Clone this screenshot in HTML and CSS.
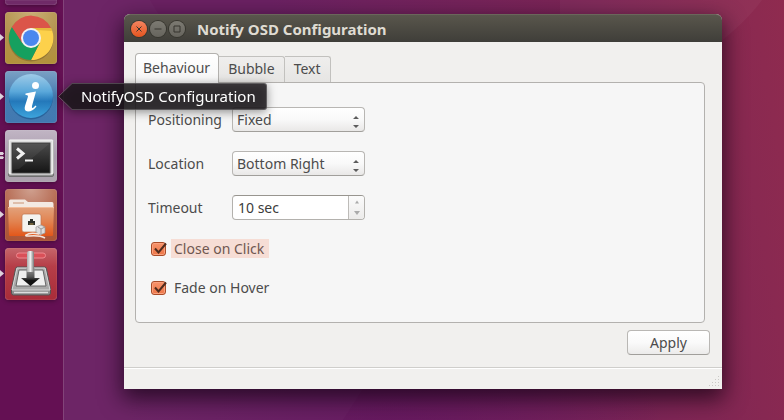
FILE: index.html
```html
<!DOCTYPE html>
<html lang="en">
<head>
<meta charset="utf-8">
<title>Notify OSD Configuration</title>
<link rel="stylesheet" href="styles.css">
</head>
<body>
<div class="desktop">
  <svg class="wallpaper" viewBox="0 0 784 420" preserveAspectRatio="none" aria-hidden="true">
    <path d="M762 0Q746 22 715 46H560V0Z" fill="#fff" opacity=".035"/>
    <path d="M375 370L343 420H64V0H150Z" fill="#fff" opacity=".02"/>
  </svg>
  <nav class="dock" aria-label="Launcher">
    <div class="tile tile-cut"></div>
    <button class="tile chrome" type="button" aria-label="Chrome">
      <i class="pip"></i>
      <svg viewBox="0 0 52 52" aria-hidden="true">
        <circle cx="26" cy="27" r="22.5" fill="#5b4518" opacity=".35"/>
        <path d="M26 16H46A22 22 0 0 1 26 48L34.700 31Z" fill="#fdd14b"/>
        <path d="M6.950 15 17.300 31 26 36 34.700 31 26 48A22 22 0 0 1 6.950 15Z" fill="#16a05f"/>
        <path d="M6.950 15A22 22 0 0 1 46 16H26L17.300 31Z" fill="#db5549"/>
        <path d="M26 16H46l1 3-15-1z" fill="#b98a20" opacity=".35"/>
        <circle cx="26" cy="26" r="10" fill="#f2f2f2"/>
        <circle cx="26" cy="26" r="8" fill="#4a87ee"/>
      </svg>
    </button>
    <div class="tile-wrap">
      <button class="tile info" type="button" aria-label="Notify OSD settings">
        <i class="pip"></i>
        <svg viewBox="0 0 52 52" aria-hidden="true">
          <defs>
            <linearGradient id="ball" x2="0" y2="1"><stop stop-color="#9fcbe8"/><stop offset=".4" stop-color="#5aa8da"/><stop offset=".62" stop-color="#2478ba"/><stop offset="1" stop-color="#3da4dc"/></linearGradient>
          </defs>
          <circle cx="26" cy="26.500" r="22" fill="#1f5a92" opacity=".7"/>
          <circle cx="26" cy="25" r="22" fill="url(#ball)"/>
          <circle cx="30.500" cy="14.500" r="3.500" fill="#fff"/>
          <path d="M20.500 22.500Q25 21.500 31 20.500L27 35Q26.500 38 28.500 36.500L30.500 34.500 31.500 35.500Q27.500 40.500 23 40.500 18.500 40 20 35L23 25.500Q23.500 23.700 20.500 24Z" fill="#fff"/>
        </svg>
      </button>
      <div class="tooltip" role="tooltip">
        <svg class="tooltip-arrow" viewBox="0 0 14 27" aria-hidden="true"><path class="arrow-fill" d="M14 0 0 13.500 14 27Z"/><path class="arrow-line" d="M14 .5 .5 13.500 14 26.500"/></svg>
        <span class="tooltip-text">NotifyOSD Configuration</span>
      </div>
    </div>
    <button class="tile terminal" type="button" aria-label="Terminal">
      <i class="pip pip-double"></i>
      <svg viewBox="0 0 52 52" aria-hidden="true">
        <defs><linearGradient id="screen" x2="0" y2="1"><stop stop-color="#4b4b4b"/><stop offset="1" stop-color="#151515"/></linearGradient></defs>
        <rect x="3.500" y="10.500" width="45" height="36" rx="1.500" fill="#909090" stroke="#707070"/>
        <rect x="4" y="10" width="44" height="34" rx="1" fill="#dedede" stroke="#fafafa"/>
        <rect x="7" y="13" width="38" height="30" fill="url(#screen)" stroke="#444"/>
        <path d="M8 14H44L14 39 8 40Z" fill="#fff" opacity=".06"/>
        <path d="M12 18.500 18 23.500 12 28.500" fill="none" stroke="#f2f2f2" stroke-width="3"/>
        <path d="M20 30.500H28" stroke="#f2f2f2" stroke-width="2"/>
      </svg>
    </button>
    <button class="tile folder" type="button" aria-label="Network folder">
      <i class="pip"></i>
      <svg viewBox="0 0 52 52" aria-hidden="true">
        <defs><linearGradient id="fold" x2="0" y2="1"><stop stop-color="#e2a27c"/><stop offset=".5" stop-color="#e28350"/><stop offset="1" stop-color="#e2571a"/></linearGradient></defs>
        <path d="M4 20V12Q4 10.500 5.500 10.500H20L23 13H47Q48.500 13 48.500 15V20Z" fill="#f3e9e2"/>
        <path d="M8 14H19" stroke="#c99374"/>
        <path d="M3 18H49L48 46Q48 47 47 47H5Q4 47 4 46Z" fill="url(#fold)"/>
        <path d="M3 18.500H49" stroke="#f2bb98"/>
        <rect x="17" y="25" width="19" height="18" rx="2" fill="#f4f3ef" stroke="#bd7750" stroke-width=".7"/>
        <path d="M23 36V32H25V30H28V32H30V36Z" fill="#2c3029"/>
        <path d="M24.500 35H28.500" stroke="#b4934d"/>
        <path d="M31 38 36 36 40 38V44L35 46 31 43Z" fill="#ddd" stroke="#999" stroke-width=".7"/>
        <path d="M33 38 36 40 40 38M36 40V45" fill="none" stroke="#888" stroke-width=".8"/>
        <path d="M34 45Q25 43 21 46C19 49 31 44 40 49" fill="none" stroke="#f3e6df" stroke-width="1.500"/>
      </svg>
    </button>
    <button class="tile drive" type="button" aria-label="Installer">
      <i class="pip"></i>
      <svg viewBox="0 0 52 52" aria-hidden="true">
        <defs>
          <linearGradient id="bar"><stop stop-color="#aaa"/><stop offset=".5" stop-color="#eee"/><stop offset="1" stop-color="#777"/></linearGradient>
          <linearGradient id="arrow" x2="0" y2="1"><stop stop-color="#999"/><stop offset=".5" stop-color="#555"/><stop offset=".7" stop-color="#111"/></linearGradient>
        </defs>
        <rect x="11.500" y="5" width="29" height="5" rx="2.500" fill="#d95058" stroke="#ef8990"/>
        <path d="M12 19H40Q41 19 41.500 21L45.500 41V45Q45.500 47 43.500 47H8.500Q6.500 47 6.500 45V41L10.500 21Q11 19 12 19Z" fill="#8d8d8d" stroke="#555"/>
        <path d="M12 20H40L45 42H7Z" fill="#a9a9a9" stroke="#d7d7d7"/>
        <path d="M14 22H38L41 38H11Z" fill="#efefef" stroke="#666"/>
        <path d="M9 44.500H43" stroke="#ddd" stroke-width="1.500"/>
        <path d="M21.500 20V30H16L25.500 38 35 30H29.500V20Z" fill="url(#arrow)"/>
        <path d="M22 5Q22 3 24 3H27Q29 3 29 5V24H22Z" fill="url(#bar)"/>
      </svg>
    </button>
  </nav>

  <main class="workspace">
    <section class="window" aria-labelledby="window-title">
      <header class="titlebar">
        <button class="wm close" type="button" aria-label="Close"><svg viewBox="0 0 16 16" aria-hidden="true"><path d="M5.500 5.500 10.500 10.500M10.500 5.500 5.500 10.500"/></svg></button>
        <button class="wm" type="button" aria-label="Minimise"><svg viewBox="0 0 16 16" aria-hidden="true"><path d="M4.500 8H11.500"/></svg></button>
        <button class="wm" type="button" aria-label="Maximise"><svg viewBox="0 0 16 16" aria-hidden="true"><path d="M5 5H11V11H5Z"/></svg></button>
        <h1 class="title" id="window-title">Notify OSD Configuration</h1>
      </header>
      <div class="content">
        <div class="tabs" role="tablist">
          <button class="tab active" type="button" role="tab" aria-selected="true">Behaviour</button>
          <button class="tab" type="button" role="tab" aria-selected="false">Bubble</button>
          <button class="tab" type="button" role="tab" aria-selected="false">Text</button>
        </div>
        <form class="panel" id="settings">
          <div class="fields">
            <label for="positioning">Positioning</label>
            <div class="combo">
              <select id="positioning"><option>Fixed</option></select>
              <svg viewBox="0 0 6 12" aria-hidden="true"><path d="M0 3 3 0 6 3ZM0 9H6L3 12Z"/></svg>
            </div>
            <label for="location">Location</label>
            <div class="combo">
              <select id="location"><option>Bottom Right</option></select>
              <svg viewBox="0 0 6 12" aria-hidden="true"><path d="M0 3 3 0 6 3ZM0 9H6L3 12Z"/></svg>
            </div>
            <label for="timeout">Timeout</label>
            <div class="spin">
              <input id="timeout" type="text" value="10 sec">
              <div class="steps">
                <button type="button" aria-label="Increase"><svg viewBox="0 0 6 4" aria-hidden="true"><path d="M1 3.500 3 .5 5 3.500Z"/></svg></button>
                <button type="button" aria-label="Decrease"><svg viewBox="0 0 6 4" aria-hidden="true"><path d="M0 0H6L3 4Z"/></svg></button>
              </div>
            </div>
          </div>
          <div class="checks">
            <div class="check">
              <span class="box"><input id="close-click" type="checkbox" checked><svg viewBox="0 0 18 16" aria-hidden="true"><path d="M4 7.500 7.500 11.500 15 2.500"/></svg></span>
              <label class="focused" for="close-click">Close on Click</label>
            </div>
            <div class="check">
              <span class="box"><input id="fade-hover" type="checkbox" checked><svg viewBox="0 0 18 16" aria-hidden="true"><path d="M4 7.500 7.500 11.500 15 2.500"/></svg></span>
              <label for="fade-hover">Fade on Hover</label>
            </div>
          </div>
        </form>
        <div class="actions"><button class="apply" type="submit" form="settings">Apply</button></div>
      </div>
      <footer class="statusbar">
        <svg viewBox="0 0 12 12" aria-hidden="true"><path d="M10.500 1V12M7.500 4V12M4.500 7V12M1.500 10V12"/></svg>
      </footer>
    </section>
  </main>
</div>
</body>
</html>
```
FILE: styles.css
```css
* { box-sizing: border-box; }

body {
  margin: 0;
  color: #4c4c4c;
  font: 14px/20px "Noto Sans", "Open Sans", sans-serif;
}

button, input, select { font: inherit; color: inherit; }
button { padding: 0; border: 0; }
svg { display: block; }

.desktop {
  position: relative;
  display: flex;
  min-height: 100vh;
  overflow: hidden;
  background:
    radial-gradient(circle at 50% 110%, rgba(98, 20, 94, .7), transparent 45%),
    linear-gradient(80deg, #6b2163 0%, #6b2163 40%, #7b2456 75%, #8f2b4f 100%);
}

.wallpaper {
  position: absolute;
  inset: 0;
  width: 100%;
  height: 100%;
}

.dock {
  position: relative;
  z-index: 2;
  display: flex;
  flex: none;
  flex-direction: column;
  gap: 7px;
  width: 64px;
  padding-left: 5px;
  background: #641053;
  border-right: 1px solid #824479;
}

.tile {
  position: relative;
  flex: none;
  display: block;
  width: 52px;
  height: 52px;
  border-radius: 4px;
  box-shadow: inset 0 0 1px rgba(255, 255, 255, .6), 0 1px 4px rgba(0, 0, 0, .35);
}

.tile > svg { width: 100%; height: 100%; }
.tile-cut { height: 5px; border-radius: 0 0 4px 4px; background: #702a68; }
.tile-wrap { position: relative; }
.chrome { background: radial-gradient(circle at 50% 0, #c9ae75, #b3924e 55%, #b19238); }
.info { background: linear-gradient(#7ba0c4, #447bb0 50%, #4279b1); }
.terminal { background: linear-gradient(#c1b5c4, #a99cae 50%, #ada4ae); }
.folder { background: radial-gradient(circle at 50% 0, #cfa08f, #b26249 55%, #aa5232); }
.drive { background: linear-gradient(#c5666b, #b63e48 35%, #a92c39); }

.pip {
  position: absolute;
  top: 22px;
  left: -5px;
  width: 4px;
  height: 7px;
  background: #ddd2dc;
  clip-path: polygon(0 0, 100% 50%, 0 100%);
}

.pip-double { clip-path: polygon(0 0, 70% 0, 100% 20%, 70% 42%, 0 42%, 0 60%, 70% 60%, 100% 80%, 70% 100%, 0 100%); }

.tooltip {
  position: absolute;
  top: 12px;
  left: 53px;
  display: flex;
  height: 27px;
  white-space: nowrap;
  color: #fff;
  font-size: 15px;
  filter: drop-shadow(0 2px 5px rgba(0, 0, 0, .5));
}

.tooltip-arrow { width: 14px; height: 27px; }
.arrow-fill { fill: rgba(28, 24, 28, .84); }
.arrow-line { fill: none; stroke: #6d5069; }

.tooltip-text {
  padding: 2px 10px 3px 9px;
  background: rgba(28, 24, 28, .84);
  border: solid rgba(255, 255, 255, .2);
  border-width: 1px 1px 1px 0;
  border-radius: 0 3px 3px 0;
}

.workspace {
  position: relative;
  flex: 1;
  min-width: 0;
  padding: 14px 62px 31px 60px;
}

.window {
  background: #f1f0ee;
  border-radius: 6px 6px 0 0;
  box-shadow: 0 8px 22px 2px rgba(15, 0, 15, .7);
}

.titlebar {
  display: flex;
  align-items: center;
  gap: 3px;
  height: 28px;
  padding-left: 7px;
  border-radius: 6px 6px 0 0;
  border-top: 1px solid #6a665b;
  background: linear-gradient(#59564c, #3f3e39);
}

.wm {
  width: 16px;
  height: 16px;
  border-radius: 50%;
  background: linear-gradient(#7c7a72, #66645d);
  box-shadow: 0 0 0 1px #37362f;
}

.wm.close { background: linear-gradient(#f58460, #e4551f); }
.wm svg { fill: none; stroke: #37352f; }

.title {
  margin: 0 0 0 9px;
  color: #dfdbd2;
  font-size: 15px;
  line-height: 20px;
  font-weight: 700;
}

.content { padding: 11px 12px 12px 11px; }

.tabs { display: flex; align-items: flex-end; }

.tab {
  height: 26px;
  padding: 0 9px 1px;
  border: solid #c2c1be;
  border-width: 1px 1px 0 0;
  border-radius: 0 3px 0 0;
  background: linear-gradient(#efeeed, #e6e5e3);
}

.tab.active {
  position: relative;
  height: 30px;
  padding: 0 8px 1px 7px;
  margin-bottom: -1px;
  border-color: #b3b1ae;
  border-left-width: 1px;
  border-radius: 4px 4px 0 0;
  background: linear-gradient(#fff, #f6f6f6);
}

.panel {
  margin-right: 5px;
  padding: 24px 12px 25px;
  border: 1px solid #b3b1ae;
  border-radius: 0 4px 4px 4px;
  background: #f6f6f6;
}

.fields {
  display: grid;
  grid-template-columns: 84px 133px;
  row-gap: 19px;
  align-items: center;
}

.combo {
  position: relative;
  height: 25px;
}

.combo select {
  width: 100%;
  height: 100%;
  padding: 0 20px 0 4px;
  appearance: none;
  border: 1px solid #b8b6b3;
  border-bottom-color: #a19f9b;
  border-radius: 4px;
  background: linear-gradient(#fff, #f9f9f9 50%, #e9e8e7);
}

.combo svg {
  position: absolute;
  top: 9px;
  right: 6px;
  width: 6px;
  height: 12px;
  fill: #5c5c5c;
  pointer-events: none;
}

.spin {
  display: flex;
  height: 25px;
  overflow: hidden;
  border: 1px solid #b3b1ad;
  border-top-color: #98958f;
  border-radius: 4px;
  background: #fff;
}

.spin input {
  flex: 1;
  min-width: 0;
  padding: 0 5px;
  border: 0;
  background: transparent;
  color: #3c3c3c;
}

.steps {
  display: grid;
  width: 16px;
  border-left: 1px solid #bdbbb8;
  background: linear-gradient(#fbfbfb, #ecebea);
}

.steps button {
  display: grid;
  place-items: center;
  background: transparent;
}

.steps svg { width: 6px; height: 4px; fill: #aaa; }

.checks {
  display: grid;
  gap: 20px;
  padding: 19px 0 0 3px;
}

.check { display: flex; align-items: center; gap: 2px; height: 19px; }

.box { position: relative; width: 18px; height: 16px; }

.box input {
  display: block;
  width: 15px;
  height: 14px;
  margin: 1px 0 0;
  appearance: none;
  border: 1px solid #a94b28;
  border-radius: 3px;
  background: linear-gradient(#f7936b, #ed7648);
  box-shadow: inset 0 0 0 1px #f9a17e;
}

.box svg {
  position: absolute;
  inset: 0;
  fill: none;
  stroke: #4f2c1e;
  stroke-width: 2;
  pointer-events: none;
}

.check label { padding: 0 5px 0 3px; line-height: 19px; }
.focused { color: #705750; background: #f6ddd5; }

.actions { display: flex; justify-content: flex-end; padding-top: 7px; }

.apply {
  width: 83px;
  height: 25px;
  border: 1px solid #b9b7b4;
  border-bottom-color: #a19f9b;
  border-radius: 4px;
  background: linear-gradient(#fff, #fafafa 50%, #ecebea);
}

.statusbar {
  display: flex;
  align-items: flex-end;
  justify-content: flex-end;
  height: 22px;
  padding: 0 2px 2px 0;
  border-top: 1px solid #cfcecb;
  box-shadow: inset 0 1px #fff;
}

.statusbar svg {
  width: 12px;
  height: 12px;
  fill: none;
  stroke: #cbc9c6;
  stroke-dasharray: 1 2;
}
```
